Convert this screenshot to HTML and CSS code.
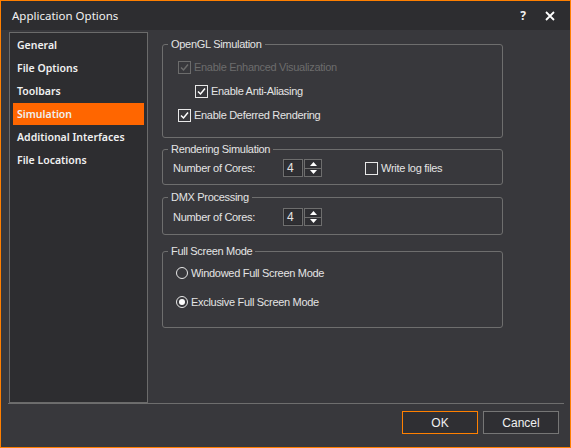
FILE: index.html
```html
<!DOCTYPE html>
<html lang="en">
<head>
  <meta charset="UTF-8">
  <title>Application Options</title>
  <link rel="stylesheet" href="styles.css">
</head>
<body>
  <div class="window">
    <!-- Title bar -->
    <div class="titlebar">
      <span class="title">Application Options</span>
      <span class="help">?</span>
      <svg class="close" width="10" height="10" viewBox="0 0 10 10">
        <path d="M1 1 L9 9 M9 1 L1 9" stroke="#fff" stroke-width="1.8"/>
      </svg>
    </div>

    <div class="main">
      <!-- Category list -->
      <ul class="nav">
        <li>General</li>
        <li>File Options</li>
        <li>Toolbars</li>
        <li class="active">Simulation</li>
        <li>Additional Interfaces</li>
        <li>File Locations</li>
      </ul>

      <!-- Simulation page -->
      <div class="page">
        <fieldset class="group group-gl">
          <legend>OpenGL Simulation</legend>
          <div class="row disabled">
            <span class="check on"><svg width="11" height="11" viewBox="0 0 11 11"><path d="M2 5.5 L4.5 8 L9 2.5" fill="none" stroke="currentColor" stroke-width="1.5"/></svg></span>
            Enable Enhanced Visualization
          </div>
          <div class="row indent">
            <span class="check on"><svg width="11" height="11" viewBox="0 0 11 11"><path d="M2 5.5 L4.5 8 L9 2.5" fill="none" stroke="currentColor" stroke-width="1.5"/></svg></span>
            Enable Anti-Aliasing
          </div>
          <div class="row">
            <span class="check on"><svg width="11" height="11" viewBox="0 0 11 11"><path d="M2 5.5 L4.5 8 L9 2.5" fill="none" stroke="currentColor" stroke-width="1.5"/></svg></span>
            Enable Deferred Rendering
          </div>
        </fieldset>

        <fieldset class="group group-render">
          <legend>Rendering Simulation</legend>
          <div class="field">
            <span class="label">Number of Cores:</span>
            <div class="spin">
              <span class="spin-value">4</span>
              <div class="spin-btns">
                <span class="spin-btn"><svg width="7" height="4" viewBox="0 0 7 4"><path d="M0 4 L3.5 0 L7 4Z" fill="#fff"/></svg></span>
                <span class="spin-btn"><svg width="7" height="4" viewBox="0 0 7 4"><path d="M0 0 L3.5 4 L7 0Z" fill="#fff"/></svg></span>
              </div>
            </div>
            <div class="row log">
              <span class="check"></span>
              Write log files
            </div>
          </div>
        </fieldset>

        <fieldset class="group group-dmx">
          <legend>DMX Processing</legend>
          <div class="field">
            <span class="label">Number of Cores:</span>
            <div class="spin">
              <span class="spin-value">4</span>
              <div class="spin-btns">
                <span class="spin-btn"><svg width="7" height="4" viewBox="0 0 7 4"><path d="M0 4 L3.5 0 L7 4Z" fill="#fff"/></svg></span>
                <span class="spin-btn"><svg width="7" height="4" viewBox="0 0 7 4"><path d="M0 0 L3.5 4 L7 0Z" fill="#fff"/></svg></span>
              </div>
            </div>
          </div>
        </fieldset>

        <fieldset class="group group-screen">
          <legend>Full Screen Mode</legend>
          <div class="row radio-row">
            <span class="radio"></span>
            Windowed Full Screen Mode
          </div>
          <div class="row radio-row">
            <span class="radio on"></span>
            Exclusive Full Screen Mode
          </div>
        </fieldset>
      </div>
    </div>

    <!-- Dialog buttons -->
    <div class="footer">
      <button class="btn btn-ok">OK</button>
      <button class="btn">Cancel</button>
    </div>
  </div>
</body>
</html>
```

FILE: styles.css
```css
/* General styles */
html, body {
  margin: 0;
  padding: 0;
  background: #38383c;
}

.window {
  width: 571px;
  height: 448px;
  box-sizing: border-box;
  border: 1px solid #ff7f00;
  background: #38383c;
  display: flex;
  flex-direction: column;
  color: #e8e8e8;
}

/* Title bar */
.titlebar {
  height: 29px;
  background: #2d2d30;
  display: flex;
  align-items: center;
  padding: 0 15px 0 11px;
  font-family: "Noto Sans", sans-serif;
  font-size: 11.5px;
  color: #f2f2f2;
}

.title {
  flex: 1;
}

.help {
  font-weight: bold;
  font-size: 12px;
  margin-right: 19px;
}

/* Main area */
.main {
  flex: 1;
  display: flex;
  padding: 2px 0 0 8px;
}

.nav {
  list-style: none;
  margin: 0;
  padding: 1px 2px 0 3px;
  width: 132px;
  background: #2d2d30;
  border: 1px solid #6b6b6b;
  font-family: "Noto Sans", sans-serif;
  font-size: 10.5px;
  font-weight: 600;
  color: #f0f0f0;
}

.nav li {
  height: 22px;
  line-height: 22px;
  margin-bottom: 1px;
  padding-left: 4px;
  width: 127px;
}

.nav li.active {
  background: #ff6600;
}

.page {
  margin-left: 14px;
  width: 341px;
  font-family: "Liberation Sans", Arial, sans-serif;
  font-size: 11px;
  letter-spacing: -0.3px;
}

/* Group boxes */
.group {
  margin: 0;
  border: 1px solid #6e6e6e;
  border-radius: 3px;
  padding: 0 10px 0 5px;
  color: #e4e4e4;
}

.group legend {
  padding: 0 3px;
  line-height: 13px;
  font-size: 11px;
}

.group-gl {
  margin-top: 6px;
  padding-top: 4px;
  padding-bottom: 10px;
}

.group-gl .row {
  margin-left: 10px;
}

.group-render {
  margin-top: 5px;
  padding-top: 2px;
  padding-bottom: 6px;
}

.group-dmx {
  margin-top: 6px;
  padding-top: 3px;
  padding-bottom: 7px;
}

.group-screen {
  margin-top: 10px;
  padding-top: 0;
  padding-bottom: 11px;
}

.group-render .field,
.group-dmx .field {
  margin-left: 5px;
}

.group-screen .row {
  margin-left: 8px;
}

/* Check rows */
.row {
  display: flex;
  align-items: center;
  height: 24px;
  gap: 3px;
}

.group-gl .row.indent {
  margin-left: 27px;
}

.row.disabled {
  color: #6c6c6c;
}

.check {
  width: 11px;
  height: 11px;
  border: 1px solid #e8e8e8;
  color: #ffffff;
  display: flex;
}

.disabled .check {
  border-color: #6c6c6c;
  color: #6c6c6c;
}

.radio-row {
  height: 29px;
}

.radio {
  width: 10px;
  height: 10px;
  border: 1px solid #e8e8e8;
  border-radius: 50%;
  display: flex;
  align-items: center;
  justify-content: center;
}

.radio.on::after {
  content: "";
  width: 6px;
  height: 6px;
  border-radius: 50%;
  background: #ffffff;
}

/* Number fields */
.field {
  display: flex;
  align-items: center;
  height: 20px;
}

.label {
  width: 110px;
}

.spin {
  display: flex;
  gap: 1px;
}

.spin-value {
  width: 15px;
  height: 16px;
  line-height: 16px;
  padding-left: 3px;
  border: 1px solid #6e6e6e;
  background: #2f2f33;
  font-size: 12px;
  box-shadow: inset 0 0 0 1px #2a2a2d;
}

.spin-btns {
  display: flex;
  flex-direction: column;
  border: 1px solid #6e6e6e;
  width: 16px;
}

.spin-btn {
  flex: 1;
  display: flex;
  align-items: center;
  justify-content: center;
  background: #2f2f33;
}

.spin-btn + .spin-btn {
  border-top: 1px solid #6e6e6e;
}

.row.log {
  margin-left: 43px;
}

/* Footer */
.footer {
  margin: 0 6px 0 7px;
  border-top: 1px solid #6e6e6e;
  display: flex;
  justify-content: flex-end;
  gap: 5px;
  padding: 7px 5px 13px 0;
}

.btn {
  width: 76px;
  height: 23px;
  background: #2f2f33;
  border: 1px solid #767676;
  color: #f0f0f0;
  font-family: "Liberation Sans", Arial, sans-serif;
  font-size: 12px;
  padding: 0;
}

.btn-ok {
  border-color: #ff8000;
}
```
